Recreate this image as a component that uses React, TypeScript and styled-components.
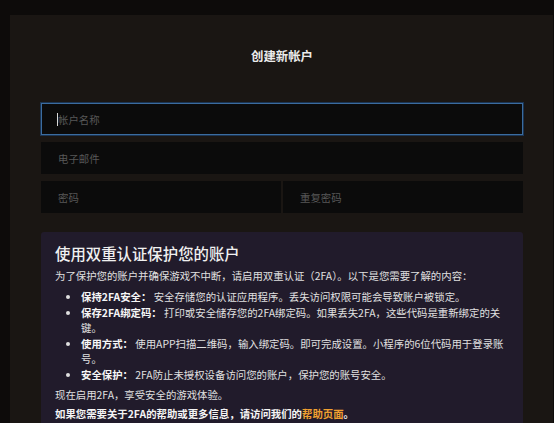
import React, { FC } from 'react';
import styled, { createGlobalStyle } from 'styled-components';

const GlobalStyle = createGlobalStyle`
  html, body {
    margin: 0;
    padding: 0;
    background: #0d0b0a;
  }
  body {
    font-family: "Noto Sans CJK SC", "Noto Sans", sans-serif;
    color: #e4e4e4;
  }
  * {
    box-sizing: border-box;
  }
`;

const Page = styled.div`
  min-height: 423px;
  padding: 15px 1px 0 10px;
  overflow: hidden;
`;

const Panel = styled.div`
  background: #1a1613;
  min-height: 408px;
  padding: 33px 30px 0 31px;
`;

const Title = styled.h2`
  margin: 0;
  text-align: center;
  font-size: 12.4px;
  line-height: 16px;
  font-weight: 600;
  color: #ebebeb;
`;

const Form = styled.form`
  display: flex;
  flex-direction: column;
  gap: 7px;
  margin-top: 39px;
`;

const FieldWrap = styled.div`
  position: relative;
  display: flex;
`;

const Input = styled.input<{ $focused?: boolean }>`
  width: 100%;
  height: 32px;
  padding: 0 16px;
  background: #0b0b0b;
  border: 1px solid ${({ $focused }) => ($focused ? '#3b6c9f' : '#0b0b0b')};
  box-shadow: ${({ $focused }) => ($focused ? '0 0 0 1px #1b3452' : 'none')};
  outline: none;
  color: #ddd;
  font-family: inherit;
  font-size: 10.4px;

  &::placeholder {
    color: #585858;
  }
`;

// static text cursor shown in the focused field
const Caret = styled.span`
  position: absolute;
  left: 16px;
  top: 10px;
  width: 1px;
  height: 13px;
  background: #d8d8d8;
`;

const PasswordRow = styled.div`
  display: grid;
  grid-template-columns: 1fr 1fr;
  gap: 2px;
`;

const InfoBox = styled.section`
  margin-top: 19px;
  background: #211b2b;
  border-radius: 3px;
  padding: 11px 14px 12px;
`;

const InfoHeading = styled.h3`
  margin: 0;
  font-size: 15.4px;
  line-height: 20px;
  font-weight: 500;
  color: #f0f0f0;
`;

const Text = styled.p<{ $strong?: boolean }>`
  margin: ${({ $strong }) => ($strong ? '4px 0 0' : '5px 0 0')};
  font-size: 10.4px;
  line-height: 15px;
  font-weight: ${({ $strong }) => ($strong ? 700 : 400)};
  color: ${({ $strong }) => ($strong ? '#f4f4f4' : '#e0e0e0')};
`;

const List = styled.ul`
  margin: 6px 0 0;
  padding-left: 26px;
  font-size: 10.4px;
  line-height: 15.5px;
  color: #e0e0e0;
`;

const Item = styled.li`
  margin: 0;
`;

const Label = styled.strong`
  font-weight: 700;
  color: #f6f6f6;
`;

const HelpLink = styled.a`
  color: #f0a030;
  text-decoration: none;
`;

const tips = [
  { label: '保持2FA安全：', text: '安全存储您的认证应用程序。丢失访问权限可能会导致账户被锁定。' },
  { label: '保存2FA绑定码：', text: '打印或安全储存您的2FA绑定码。如果丢失2FA，这些代码是重新绑定的关键。' },
  { label: '使用方式：', text: '使用APP扫描二维码，输入绑定码。即可完成设置。小程序的6位代码用于登录账号。' },
  { label: '安全保护：', text: '2FA防止未授权设备访问您的账户，保护您的账号安全。' },
];

const App: FC = () => (
  <>
    <GlobalStyle />
    <Page>
      <Panel>
        <Title>创建新帐户</Title>
        <Form onSubmit={(e) => e.preventDefault()}>
          <FieldWrap>
            <Input $focused placeholder="帐户名称" />
            <Caret />
          </FieldWrap>
          <FieldWrap>
            <Input type="email" placeholder="电子邮件" />
          </FieldWrap>
          <PasswordRow>
            <Input type="password" placeholder="密码" />
            <Input type="password" placeholder="重复密码" />
          </PasswordRow>
        </Form>
        <InfoBox>
          <InfoHeading>使用双重认证保护您的账户</InfoHeading>
          <Text>为了保护您的账户并确保游戏不中断，请启用双重认证（2FA）。以下是您需要了解的内容：</Text>
          <List>
            {tips.map((tip) => (
              <Item key={tip.label}>
                <Label>{tip.label}</Label> {tip.text}
              </Item>
            ))}
          </List>
          <Text>现在启用2FA，享受安全的游戏体验。</Text>
          <Text $strong>
            如果您需要关于2FA的帮助或更多信息，请访问我们的<HelpLink href="#">帮助页面</HelpLink>。
          </Text>
        </InfoBox>
      </Panel>
    </Page>
  </>
);

export default App;
